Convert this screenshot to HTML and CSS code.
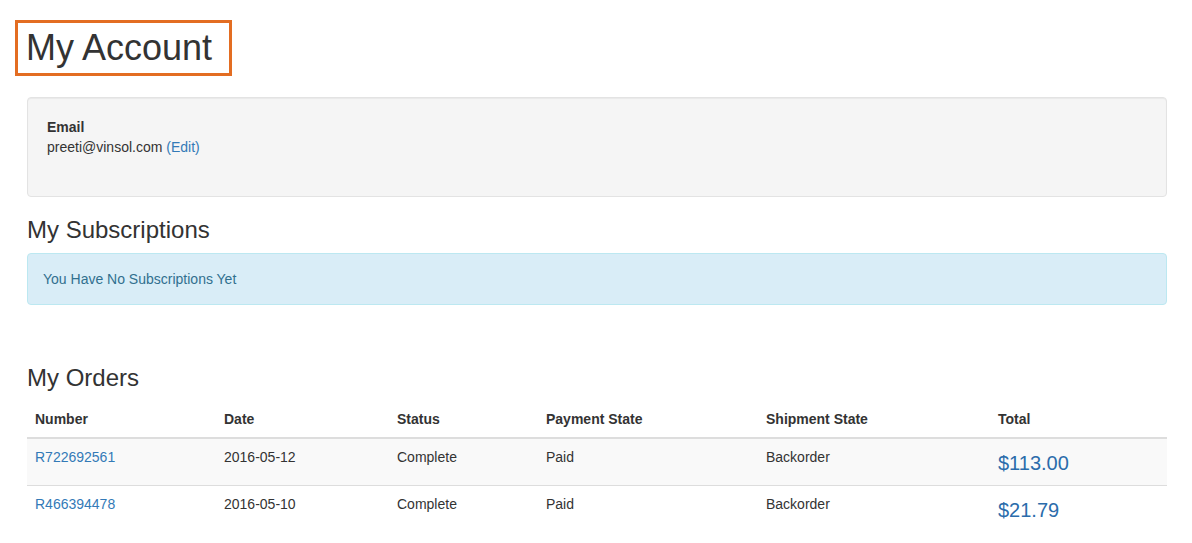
FILE: index.html
```html
<!DOCTYPE html>
<html>
<head>
<meta charset="utf-8">
<title>My Account</title>
<link rel="stylesheet" href="styles.css">
</head>
<body>
<div class="container">
  <div class="page-title">
    <h1 class="account-title">My Account</h1>
  </div>

  <div class="well">
    <dl class="account-info">
      <dt>Email</dt>
      <dd>preeti@vinsol.com <a href="#">(Edit)</a></dd>
    </dl>
  </div>

  <h3 class="section-title">My Subscriptions</h3>
  <div class="alert-info">You Have No Subscriptions Yet</div>

  <h3 class="section-title orders-title">My Orders</h3>
  <table class="orders">
    <colgroup>
      <col class="c-number">
      <col class="c-date">
      <col class="c-status">
      <col class="c-payment">
      <col class="c-shipment">
      <col class="c-total">
    </colgroup>
    <thead>
      <tr>
        <th>Number</th>
        <th>Date</th>
        <th>Status</th>
        <th>Payment State</th>
        <th>Shipment State</th>
        <th>Total</th>
      </tr>
    </thead>
    <tbody>
      <tr class="odd">
        <td><a href="#">R722692561</a></td>
        <td>2016-05-12</td>
        <td>Complete</td>
        <td>Paid</td>
        <td>Backorder</td>
        <td><span class="price">$113.00</span></td>
      </tr>
      <tr>
        <td><a href="#">R466394478</a></td>
        <td>2016-05-10</td>
        <td>Complete</td>
        <td>Paid</td>
        <td>Backorder</td>
        <td><span class="price">$21.79</span></td>
      </tr>
    </tbody>
  </table>
</div>
</body>
</html>
```

FILE: styles.css
```css
html, body {
  margin: 0;
  padding: 0;
  background: #fff;
}
body {
  font-family: "Liberation Sans", Arial, Helvetica, sans-serif;
  font-size: 14px;
  line-height: 20px;
  color: #333;
}
a {
  color: #337ab7;
  text-decoration: none;
}
.container {
  width: 1140px;
  padding-left: 27px;
  padding-right: 25px;
}
.page-title {
  display: flex;
  margin-top: 20px;
  margin-bottom: 21px;
  margin-left: -12px;
}
.account-title {
  margin: 0;
  font-size: 36px;
  line-height: 39.6px;
  font-weight: 500;
  border: 3px solid #e36d22;
  padding: 5px 17px 5px 8px;
}
.well {
  background: #f5f5f5;
  border: 1px solid #e3e3e3;
  border-radius: 4px;
  padding: 19px;
  margin-bottom: 20px;
  box-shadow: inset 0 1px 1px rgba(0,0,0,0.05);
}
.account-info {
  margin: 0 0 20px 0;
}
.account-info dt {
  font-weight: bold;
}
.account-info dd {
  margin: 0;
}
.section-title {
  font-size: 24px;
  line-height: 26.4px;
  font-weight: 500;
  margin: 20px 0 10px 0;
}
.alert-info {
  background: #d9edf7;
  border: 1px solid #bce8f1;
  color: #31708f;
  border-radius: 4px;
  padding: 15px;
  margin-bottom: 20px;
}
.orders-title {
  margin-top: 60px;
}
.orders {
  width: 1140px;
  border-collapse: collapse;
  border-spacing: 0;
  table-layout: fixed;
}
.c-number { width: 189px; }
.c-date { width: 173px; }
.c-status { width: 149px; }
.c-payment { width: 220px; }
.c-shipment { width: 232px; }
.c-total { width: 177px; }
.orders th {
  text-align: left;
  font-weight: bold;
  padding: 8px;
  border-bottom: 2px solid #ddd;
  vertical-align: bottom;
}
.orders td {
  padding: 8px;
  vertical-align: top;
  border-top: 1px solid #ddd;
}
.orders thead + tbody tr:first-child td {
  border-top: 0;
}
.orders tr.odd td {
  background: #f9f9f9;
}
.price {
  display: block;
  font-size: 20px;
  line-height: 30px;
  padding-top: 1px;
  margin-bottom: -1px;
  color: #2b6cab;
}
```
